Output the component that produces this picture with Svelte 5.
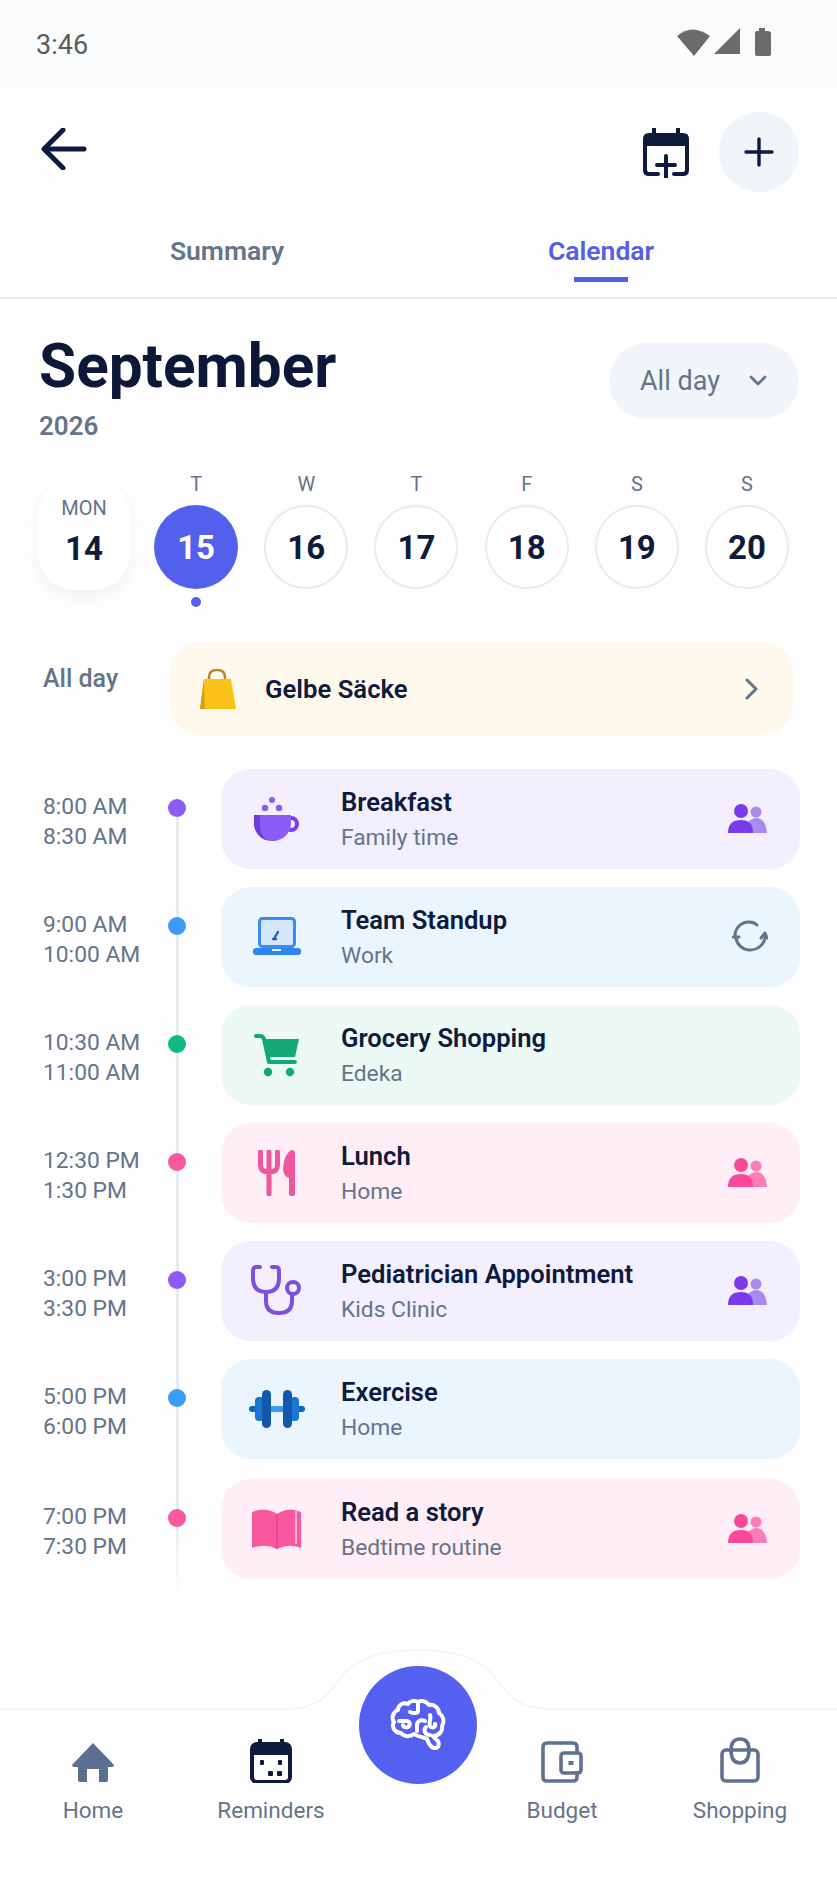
<script>
  const days = [
    { letter: 'T', num: 15, active: true },
    { letter: 'W', num: 16 },
    { letter: 'T', num: 17 },
    { letter: 'F', num: 18 },
    { letter: 'S', num: 19 },
    { letter: 'S', num: 20 }
  ];

  const events = [
    { start: '8:00 AM', end: '8:30 AM', title: 'Breakfast', sub: 'Family time', tone: 'purple', icon: 'cup', side: 'people' },
    { start: '9:00 AM', end: '10:00 AM', title: 'Team Standup', sub: 'Work', tone: 'blue', icon: 'laptop', side: 'sync' },
    { start: '10:30 AM', end: '11:00 AM', title: 'Grocery Shopping', sub: 'Edeka', tone: 'green', icon: 'cart' },
    { start: '12:30 PM', end: '1:30 PM', title: 'Lunch', sub: 'Home', tone: 'pink', icon: 'fork', side: 'people' },
    { start: '3:00 PM', end: '3:30 PM', title: 'Pediatrician Appointment', sub: 'Kids Clinic', tone: 'purple', icon: 'stetho', side: 'people' },
    { start: '5:00 PM', end: '6:00 PM', title: 'Exercise', sub: 'Home', tone: 'blue', icon: 'dumbbell' },
    { start: '7:00 PM', end: '7:30 PM', title: 'Read a story', sub: 'Bedtime routine', tone: 'pink', icon: 'book', side: 'people' }
  ];
</script>

{#snippet eventIcon(name)}
  {#if name === 'cup'}
    <svg width="46" height="48" viewBox="0 0 46 48">
      <circle cx="18" cy="5" r="3" fill="#8b5cf6" />
      <circle cx="11" cy="13" r="3.2" fill="#8b5cf6" />
      <circle cx="25" cy="13" r="3.2" fill="#8b5cf6" />
      <circle cx="37" cy="29" r="6" fill="none" stroke="#7c3aed" stroke-width="4" />
      <path d="M0 20H37V28C37 38 29 46 18.5 46C8 46 0 38 0 28Z" fill="#8b5cf6" />
      <path d="M0 20H6V30C6 37 9 42 14 45.5C6 44 0 37 0 28Z" fill="#6d3fd6" />
    </svg>
  {:else if name === 'laptop'}
    <svg width="48" height="40" viewBox="0 0 48 40">
      <rect x="6.5" y="1.5" width="35" height="28" rx="3" fill="#d6e7fb" stroke="#3b8cf0" stroke-width="3" />
      <path d="M22 20l3-5" stroke="#1d5fb8" stroke-width="2.4" stroke-linecap="round" />
      <path d="M20 22h3" stroke="#1d5fb8" stroke-width="2.4" stroke-linecap="round" />
      <rect x="0" y="31" width="48" height="7" rx="3" fill="#2f85ee" />
      <rect x="19" y="32" width="9" height="2" fill="#e3f0ff" />
    </svg>
  {:else if name === 'cart'}
    <svg width="46" height="44" viewBox="0 0 46 44">
      <path d="M2 3H6Q9 3 10 6L15 29H41" fill="none" stroke="#12a974" stroke-width="4" stroke-linecap="round" stroke-linejoin="round" />
      <path d="M10 6H45L41 24H13Z" fill="#12a974" />
      <circle cx="14" cy="39" r="4.2" fill="#12a974" />
      <circle cx="36" cy="39" r="4.2" fill="#12a974" />
    </svg>
  {:else if name === 'fork'}
    <svg width="38" height="46" viewBox="0 0 38 46">
      <path d="M2.5 2V15Q2.5 22 10.500 22H11.500Q19.500 22 19.500 15V2M11 2V44" fill="none" stroke="#f0559f" stroke-width="5" stroke-linecap="round" stroke-linejoin="round" />
      <path d="M33 0Q37 0 37 3V44Q37 46 34 46Q31 46 31 44V28Q25 26 25 18Q26 5 33 0Z" fill="#f0559f" />
    </svg>
  {:else if name === 'stetho'}
    <svg width="52" height="52" viewBox="0 0 52 52">
      <path d="M9 2H5Q2 2 2 6V13Q2 27 15 27Q28 27 28 13V6Q28 2 25 2H21" fill="none" stroke="#7c4fe0" stroke-width="4" stroke-linecap="round" />
      <path d="M15 27V36Q15 48 28 48Q41 48 41 36V29" fill="none" stroke="#7c4fe0" stroke-width="4" stroke-linecap="round" />
      <circle cx="42" cy="23" r="6" fill="none" stroke="#7c4fe0" stroke-width="4" />
    </svg>
  {:else if name === 'dumbbell'}
    <svg width="56" height="40" viewBox="0 0 56 40">
      <rect x="0" y="17" width="56" height="6" rx="3" fill="#1565c0" />
      <rect x="6" y="8" width="9" height="24" rx="4" fill="#1976d2" />
      <rect x="41" y="8" width="9" height="24" rx="4" fill="#1976d2" />
      <rect x="13" y="1" width="9" height="38" rx="4.500" fill="#1259ad" />
      <rect x="34" y="1" width="9" height="38" rx="4.500" fill="#1259ad" />
      <rect x="22" y="17" width="12" height="6" fill="#3b9cf0" />
    </svg>
  {:else if name === 'book'}
    <svg width="50" height="42" viewBox="0 0 50 42">
      <path d="M0 4Q13 -2 25 6Q37 -2 49 4V40Q37 35 25 41Q13 35 0 40Z" fill="#f9589f" />
      <path d="M25 6V41" stroke="#e83f88" stroke-width="1.500" />
      <path d="M44 3V36" stroke="#fdb6d5" stroke-width="2" />
    </svg>
  {/if}
{/snippet}

{#snippet sideIcon(name, tone)}
  {#if name === 'people'}
    <svg width="40" height="32" viewBox="0 0 40 32" class="people {tone}">
      <circle cx="28" cy="9" r="5.500" class="back" />
      <path d="M20 30V19Q24 15 29 15Q38 16 39 30Z" class="back" />
      <circle cx="13" cy="8" r="7" class="front" />
      <path d="M0 30Q0 17 13 17Q25 17 25 30Z" class="front" />
    </svg>
  {:else if name === 'sync'}
    <svg width="36" height="36" viewBox="0 0 36 36" fill="none" stroke="#64748b" stroke-width="3" stroke-linecap="round" stroke-linejoin="round">
      <path d="M3 17C3 9 9 3 17 3C20 3 23 4 25 6" />
      <path d="M33 17C33 25 26 31 18 31C11 31 5 26 4 19" />
      <path d="M1 18H7" />
      <path d="M29 19L33 14L35 19" />
    </svg>
  {/if}
{/snippet}

<div class="screen">
  <div class="status">
    <span class="clock">3:46</span>
    <svg width="96" height="30" viewBox="0 0 96 30" fill="#6b6b6b">
      <path d="M0 9Q15 -4 33 9L17 29Z" />
      <path d="M37 27L63 1V27Z" />
      <path d="M78 6Q78 4 80 4H82V1H88V4H90Q94 4 94 6V27Q94 29 92 29H80Q78 29 78 27Z" />
    </svg>
  </div>

  <header class="topbar">
    <svg class="back-arrow" width="46" height="42" viewBox="0 0 46 42" fill="none" stroke="#0f1b3d" stroke-width="5" stroke-linecap="round" stroke-linejoin="round">
      <path d="M22 2L3 21L22 40" />
      <path d="M4 21H43" />
    </svg>
    <div class="actions">
      <svg width="46" height="50" viewBox="0 0 46 50">
        <path d="M11 0V8M35 0V8" stroke="#0f1b3d" stroke-width="4" stroke-linecap="round" />
        <path d="M0 11Q0 5 6 5H40Q46 5 46 11V18H0Z" fill="#0f1b3d" />
        <path d="M2 16V42Q2 46 6 46H15M44 16V42Q44 46 40 46H31" fill="none" stroke="#0f1b3d" stroke-width="4" stroke-linecap="round" />
        <path d="M23 28V49M14 37H32" stroke="#0f1b3d" stroke-width="4" stroke-linecap="round" />
      </svg>
      <button class="add" aria-label="Add">
        <svg width="30" height="30" viewBox="0 0 30 30" stroke="#0f1b3d" stroke-width="3.400" stroke-linecap="round">
          <path d="M15 2V28M2 15H28" />
        </svg>
      </button>
    </div>
  </header>

  <nav class="tabs">
    <span class="tab">Summary</span>
    <span class="tab current">Calendar</span>
  </nav>

  <section class="month">
    <div>
      <h1>September</h1>
      <div class="year">2026</div>
    </div>
    <div class="range">
      <span>All day</span>
      <svg width="18" height="12" viewBox="0 0 18 12" fill="none" stroke="#64748b" stroke-width="2.800" stroke-linecap="round" stroke-linejoin="round">
        <path d="M2 2L9 9L16 2" />
      </svg>
    </div>
  </section>

  <section class="week">
    <div class="today-card">
      <span class="mon">MON</span>
      <span class="num">14</span>
    </div>
    {#each days as d}
      <div class="day">
        <span class="letter">{d.letter}</span>
        <span class="circle" class:active={d.active}>{d.num}</span>
        {#if d.active}<span class="mark"></span>{/if}
      </div>
    {/each}
  </section>

  <section class="allday">
    <span class="allday-label">All day</span>
    <div class="allday-card">
      <svg width="38" height="42" viewBox="0 0 38 42">
        <path d="M10 13V9Q10 2 18 2Q26 2 26 9V13" fill="none" stroke="#b7862a" stroke-width="2.600" />
        <path d="M5 11H32L37 41H1Z" fill="#fcc419" />
        <path d="M5 11L1 41H6Z" fill="#dc9c10" />
      </svg>
      <span class="allday-title">Gelbe Säcke</span>
      <svg width="14" height="22" viewBox="0 0 14 22" fill="none" stroke="#64748b" stroke-width="3" stroke-linecap="round" stroke-linejoin="round">
        <path d="M3 2L12 11L3 20" />
      </svg>
    </div>
  </section>

  <section class="timeline">
    <div class="rail"></div>
    {#each events as e}
      <div class="row">
        <div class="times">
          <span>{e.start}</span>
          <span>{e.end}</span>
        </div>
        <span class="dot {e.tone}"></span>
        <div class="card {e.tone}">
          <div class="card-icon">{@render eventIcon(e.icon)}</div>
          <div class="card-text">
            <span class="title">{e.title}</span>
            <span class="sub">{e.sub}</span>
          </div>
          {#if e.side}
            <div class="card-side">{@render sideIcon(e.side, e.tone)}</div>
          {/if}
        </div>
      </div>
    {/each}
  </section>

  <footer class="bottom">
    <svg class="hump" width="837" height="64" viewBox="0 0 837 64" fill="none" stroke="#f4f5f8" stroke-width="2">
      <path d="M0 61H285C320 61 328 46 342 28C358 8 388 2 418 2C448 2 478 8 494 28C508 46 516 61 551 61H837" />
    </svg>
    <button class="fab" aria-label="Assistant">
      <svg width="56" height="52" viewBox="0 0 56 52" fill="none" stroke="#fff" stroke-width="4" stroke-linecap="round" stroke-linejoin="round">
        <path d="M28 3C24 1 20 2 18 5C13 3 8 6 8 11C3 13 1 19 4 23C1 28 5 34 11 34C14 38 20 38 24 35C28 38 34 38 37 40C38 43 40 49 45 49C49 49 50 44 47 41C46 40 44 39 43 37C49 37 53 32 52 27C55 22 53 17 49 14C49 9 44 5 39 6C36 2 31 1 28 3Z" />
        <path d="M28 4V12M20 13C24 15 28 14 28 12M9 22H16C20 22 21 26 18 28C16 29 13 28 13 26" />
        <path d="M27 32V26C27 22 31 20 35 22M40 16C42 20 38 23 40 27C42 30 46 28 45 25M36 28C33 31 35 36 40 36" />
      </svg>
    </button>
    <div class="nav-group left">
      <div class="nav-item">
        <svg width="42" height="40" viewBox="0 0 42 40">
          <path d="M21 0L42 22Q42 24 40 24H36V37Q36 39 34 39H27V26H15V39H8Q6 39 6 37V24H2Q0 24 0 22Z" fill="#5a6f92" />
        </svg>
        <span>Home</span>
      </div>
      <div class="nav-item">
        <svg width="42" height="44" viewBox="0 0 42 44">
          <path d="M10 0V8M32 0V8" stroke="#0f1b3d" stroke-width="4" stroke-linecap="round" />
          <rect x="2" y="5" width="38" height="38" rx="5" fill="#fff" stroke="#0f1b3d" stroke-width="4" />
          <path d="M2 10Q2 5 7 5H35Q40 5 40 10V16H2Z" fill="#0f1b3d" />
          <rect x="10" y="21" width="4" height="5" rx="1" fill="#0f1b3d" />
          <rect x="28" y="21" width="4" height="5" rx="1" fill="#0f1b3d" />
          <rect x="18" y="32" width="5" height="5" rx="1" fill="#0f1b3d" />
          <rect x="27" y="32" width="5" height="5" rx="1" fill="#0f1b3d" />
        </svg>
        <span>Reminders</span>
      </div>
    </div>
    <div class="nav-group right">
      <div class="nav-item">
        <svg width="42" height="42" viewBox="0 0 42 42" fill="none" stroke="#5f7190" stroke-width="3.600" stroke-linejoin="round">
          <path d="M36 12V6Q36 2 32 2H6Q2 2 2 6V36Q2 40 6 40H32Q36 40 36 36V30" />
          <rect x="20" y="12" width="20" height="20" rx="3" />
          <rect x="27.500" y="20" width="5" height="4" fill="#5f7190" stroke="none" />
        </svg>
        <span>Budget</span>
      </div>
      <div class="nav-item">
        <svg width="42" height="46" viewBox="0 0 42 46" fill="none" stroke="#5f7190" stroke-width="3.600" stroke-linejoin="round">
          <rect x="3" y="13" width="36" height="31" rx="4" />
          <path d="M12 13C12 6 15 2 21 2C27 2 30 6 30 13C30 21 27 26 21 26C15 26 12 21 12 13Z" />
        </svg>
        <span>Shopping</span>
      </div>
    </div>
  </footer>
</div>

<style>
  :global(body) {
    margin: 0;
    background: #fefefe;
  }

  .screen {
    width: 837px;
    height: 1879px;
    position: relative;
    overflow: hidden;
    background: #fefefe;
    font-family: Roboto, "Liberation Sans", sans-serif;
    color: #0f1b3d;
  }

  .status {
    height: 88px;
    box-sizing: border-box;
    padding: 27px 64px 0 36px;
    background: #fafbfc;
    display: flex;
    justify-content: space-between;
    align-items: flex-start;
  }

  .clock {
    font-size: 27px;
    line-height: 36px;
    color: #5c5c5c;
  }

  .topbar {
    height: 104px;
    box-sizing: border-box;
    padding: 24px 38px 0 41px;
    display: flex;
    justify-content: space-between;
    align-items: flex-start;
  }

  .back-arrow {
    margin-top: 16px;
  }

  .actions {
    display: flex;
    align-items: flex-start;
    gap: 30px;
  }

  .actions > svg {
    margin-top: 16px;
  }

  .add {
    width: 80px;
    height: 80px;
    border: none;
    border-radius: 50%;
    background: #f1f4f9;
    display: flex;
    align-items: center;
    justify-content: center;
    padding: 0;
  }

  .tabs {
    height: 107px;
    box-sizing: border-box;
    border-bottom: 2px solid #e9ecf1;
    position: relative;
    display: grid;
    grid-template-columns: 454px 1fr;
  }

  .tab {
    font-size: 26.500px;
    font-weight: 600;
    color: #64748b;
    text-align: center;
    line-height: 34px;
    padding-top: 42px;
  }

  .tab.current {
    color: #5360e6;
    position: relative;
    width: 294px;
  }

  .tab.current::after {
    content: '';
    position: absolute;
    left: 120px;
    bottom: 15px;
    width: 54px;
    height: 5px;
    background: #5360e6;
  }

  .month {
    display: flex;
    justify-content: space-between;
    align-items: flex-start;
    padding: 33px 38px 0 39px;
    height: 179px;
    box-sizing: border-box;
  }

  h1 {
    margin: 0;
    font-size: 60.300px;
    font-weight: 700;
    line-height: 70px;
    color: #0d1838;
  }

  .year {
    font-size: 26px;
    font-weight: 600;
    line-height: 34px;
    color: #64748b;
    margin-top: 7px;
  }

  .range {
    width: 190px;
    height: 76px;
    margin-top: 11px;
    box-sizing: border-box;
    padding: 0 32px 0 31px;
    border-radius: 38px;
    background: #f1f4f9;
    display: flex;
    align-items: center;
    justify-content: space-between;
    font-size: 27px;
    color: #64748b;
  }

  .week {
    display: flex;
    align-items: flex-start;
    padding-left: 38px;
    height: 164px;
    box-sizing: border-box;
  }

  .today-card {
    width: 92px;
    height: 112px;
    margin-right: 11px;
    border-radius: 36px;
    background: #fff;
    box-shadow: 0 6px 16px rgba(100, 116, 139, 0.1);
    display: flex;
    flex-direction: column;
    align-items: center;
    box-sizing: border-box;
    padding-top: 18px;
  }

  .mon {
    font-size: 20px;
    line-height: 24px;
    color: #64748b;
  }

  .num {
    font-size: 33px;
    font-weight: 700;
    line-height: 40px;
    margin-top: 9px;
  }

  .day {
    width: 110.200px;
    flex: none;
    display: flex;
    flex-direction: column;
    align-items: center;
  }

  .letter {
    font-size: 20px;
    line-height: 24px;
    color: #64748b;
    margin-top: -6px;
    margin-bottom: 9px;
  }

  .circle {
    width: 84px;
    height: 84px;
    box-sizing: border-box;
    border: 2px solid #e8ebf0;
    border-radius: 50%;
    display: flex;
    align-items: center;
    justify-content: center;
    font-size: 33px;
    font-weight: 700;
    background: #fff;
  }

  .circle.active {
    border: none;
    background: #5360ec;
    color: #fff;
  }

  .mark {
    width: 10px;
    height: 10px;
    border-radius: 50%;
    background: #5360ec;
    margin-top: 8px;
  }

  .allday {
    display: flex;
    align-items: flex-start;
    padding: 0 44px 0 43px;
    justify-content: space-between;
  }

  .allday-label {
    font-size: 25px;
    line-height: 32px;
    color: #64748b;
    font-weight: 500;
    margin-top: 21px;
  }

  .allday-card {
    width: 623px;
    height: 93px;
    border-radius: 30px;
    background: #fef9ec;
    box-sizing: border-box;
    padding: 0 35px 0 29px;
    display: flex;
    align-items: center;
    gap: 28px;
  }

  .allday-title {
    flex: 1;
    font-size: 25.700px;
    font-weight: 600;
  }

  .timeline {
    position: relative;
    margin-top: 34px;
    padding: 0 37px 0 43px;
    display: flex;
    flex-direction: column;
    gap: 18px;
  }

  .rail {
    position: absolute;
    left: 176px;
    top: 39px;
    width: 3px;
    height: 792px;
    background: linear-gradient(#e8edf4 90%, rgba(232, 237, 244, 0));
  }

  .row {
    display: flex;
    height: 100px;
    position: relative;
  }

  .row:last-child {
    margin-top: 2px;
  }

  .times {
    width: 125px;
    flex: none;
    padding-top: 23px;
    display: flex;
    flex-direction: column;
    font-size: 22.800px;
    line-height: 30px;
    color: #64748b;
  }

  .dot {
    width: 18px;
    height: 18px;
    border-radius: 50%;
    flex: none;
    margin: 30px 35px 0 0;
    position: relative;
  }

  .dot.purple { background: #8b5cf6; }
  .dot.blue { background: #3b9cf6; }
  .dot.green { background: #10b981; }
  .dot.pink { background: #f9589f; }

  .card {
    flex: 1;
    border-radius: 30px;
    display: flex;
    align-items: center;
    box-sizing: border-box;
    padding-right: 32px;
  }

  .card.purple { background: #f3effe; }
  .card.blue { background: #ebf5ff; }
  .card.green { background: #ecf9f4; }
  .card.pink { background: #ffeef5; }

  .card-icon {
    width: 120px;
    flex: none;
    display: flex;
    justify-content: center;
    padding-right: 8px;
    box-sizing: border-box;
  }

  .card-text {
    flex: 1;
    display: flex;
    flex-direction: column;
  }

  .title {
    font-size: 25.600px;
    font-weight: 600;
    line-height: 32px;
  }

  .sub {
    font-size: 22.800px;
    line-height: 30px;
    color: #64748b;
    margin-top: 5px;
  }

  .card-side {
    display: flex;
    align-items: center;
  }

  .people.purple .front { fill: #7c3aed; }
  .people.purple .back { fill: #a98bf0; }
  .people.pink .front { fill: #f9489a; }
  .people.pink .back { fill: #fb7cb6; }

  .bottom {
    position: absolute;
    left: 0;
    right: 0;
    bottom: 0;
    height: 171px;
    display: flex;
    justify-content: space-between;
    box-sizing: border-box;
  }

  .hump {
    position: absolute;
    left: 0;
    top: -60px;
  }

  .fab {
    position: absolute;
    left: 359px;
    top: -42px;
    width: 118px;
    height: 118px;
    padding: 0;
    border: none;
    border-radius: 50%;
    background: #5360f0;
    display: flex;
    align-items: center;
    justify-content: center;
  }

  .nav-group {
    display: flex;
    height: 100%;
  }

  .nav-item {
    position: relative;
    display: flex;
    flex-direction: column;
    align-items: center;
    justify-content: flex-end;
    height: 117px;
    box-sizing: border-box;
    font-size: 22.500px;
    color: #64748b;
    width: 178px;
  }

  .nav-item span {
    line-height: 30px;
    margin-top: 12px;
  }

  .nav-group.left {
    padding-left: 4px;
  }

  .nav-group.right {
    padding-right: 8px;
  }
</style>
